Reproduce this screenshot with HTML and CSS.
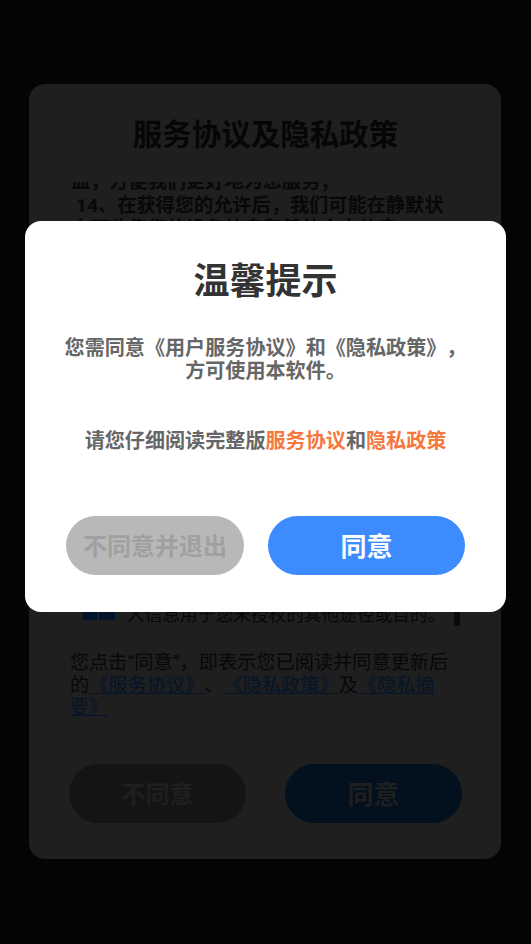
FILE: index.html
```html
<!DOCTYPE html>
<html lang="zh-CN">
<head>
<meta charset="utf-8">
<title>温馨提示</title>
<link rel="stylesheet" href="styles.css">
</head>
<body>
<main class="screen">
  <section class="policy">
    <h2 class="policy-title">服务协议及隐私政策</h2>
    <div class="scroller">
      <div class="scroll-top">
        <p class="clip-line">血，方便我们更好地为您服务；</p>
        <p class="item">14、在获得您的允许后，我们可能在静默状</p>
        <p class="clip-next">态下收集您的设备信息和其他个人信息，</p>
      </div>
      <div class="scroll-bottom">
        <span class="mark"><i class="mark-a"></i><i class="mark-b"></i></span>
        <span class="last">人信息用于您未授权的其他途径或目的。</span>
      </div>
      <span class="thumb"></span>
    </div>
    <p class="consent">您点击“同意”，即表示您已阅读并同意更新后的<a class="doc">《服务协议》</a>、<a class="doc">《隐私政策》</a>及<a class="doc">《隐私摘要》</a></p>
    <div class="policy-actions">
      <button class="pill pill-dim-grey">不同意</button>
      <button class="pill pill-dim-blue">同意</button>
    </div>
  </section>
  <section class="modal">
    <h1 class="modal-title">温馨提示</h1>
    <p class="modal-text">您需同意《用户服务协议》和《隐私政策》，<br>方可使用本软件。</p>
    <p class="modal-links">请您仔细阅读完整版<span class="accent">服务协议</span>和<span class="accent">隐私政策</span></p>
    <div class="modal-actions">
      <button class="btn btn-grey">不同意并退出</button>
      <button class="btn btn-blue">同意</button>
    </div>
  </section>
</main>
</body>
</html>
```
FILE: styles.css
```css
* { box-sizing: border-box; }
html, body { margin: 0; height: 100%; }
body {
  background: #040404;
  font-family: Roboto, "Noto Sans CJK SC", sans-serif;
  text-spacing-trim: space-all;
  overflow: hidden;
}
p, h1, h2 { margin: 0; }
button { border: 0; padding: 0; font-family: inherit; font-weight: 700; }

.screen {
  position: relative;
  width: 531px;
  height: 944px;
  padding: 84px 30px 85px 29px;
}

.policy {
  height: 775px;
  background: #1f1f1f;
  border-radius: 16px;
  display: flex;
  flex-direction: column;
  padding: 31px 39px 36px 40px;
  color: #080808;
}
.policy-title {
  font-size: 29.5px;
  line-height: 40px;
  font-weight: 700;
  text-align: center;
  color: #060606;
}
.scroller {
  position: relative;
  height: 444px;
  margin: 27px 2px 0;
  display: flex;
  flex-direction: column;
  justify-content: space-between;
  overflow: hidden;
}
.scroll-top {
  margin-top: -12px;
  font-size: 19.2px;
  line-height: 23.5px;
  font-weight: 700;
  white-space: nowrap;
}
.item { padding-left: 5px; }
.scroll-bottom {
  display: flex;
  align-items: center;
  gap: 12px;
  padding-left: 12px;
  height: 22px;
  margin-bottom: 2px;
  font-size: 17.7px;
  white-space: nowrap;
}
.mark { display: flex; gap: 2px; align-self: flex-end; padding-bottom: 4px; }
.mark i { display: block; height: 12px; background: #03132b; }
.mark-a { width: 14px; }
.mark-b { width: 16px; }
.thumb {
  position: absolute;
  right: 0;
  bottom: 0;
  width: 6px;
  height: 60px;
  border-radius: 3px;
  background: #0a0a0a;
}

.consent {
  margin-top: 26px;
  padding-left: 1px;
  font-size: 19.2px;
  line-height: 22.6px;
}
.doc {
  color: #04142a;
  text-decoration: underline;
}
.policy-actions {
  margin-top: auto;
  display: flex;
  justify-content: space-between;
}
.pill {
  width: 177px;
  height: 59px;
  border-radius: 30px;
  padding-bottom: 2px;
}
.pill-dim-grey { background: #141414; color: #1f1f1f; font-size: 24px; }
.pill-dim-blue { background: #03101e; color: #1f1f1f; font-size: 26px; }

.modal {
  position: absolute;
  left: 25px;
  top: 221px;
  width: 481px;
  height: 391px;
  background: #fff;
  border-radius: 16px;
  padding: 36px 41px 37px;
  display: flex;
  flex-direction: column;
  align-items: center;
  text-align: center;
}
.modal-title {
  font-size: 36px;
  line-height: 50px;
  font-weight: 700;
  color: #333;
}
.modal-text {
  margin-top: 30px;
  font-size: 20.1px;
  line-height: 23px;
  font-weight: 700;
  color: #666;
  white-space: nowrap;
}
.modal-links {
  margin-top: 45px;
  font-size: 20.1px;
  line-height: 27px;
  font-weight: 700;
  color: #666;
  white-space: nowrap;
}
.accent { color: #f5793f; }
.modal-actions {
  margin-top: auto;
  width: 100%;
  display: flex;
  justify-content: space-between;
}
.btn { height: 59px; border-radius: 30px; padding-bottom: 3px; }
.btn-grey { width: 178px; background: #b8b8b8; color: #a0a0a0; font-size: 24px; }
.btn-blue { width: 197px; background: #3c8cff; color: #fff; font-size: 26px; }
```
